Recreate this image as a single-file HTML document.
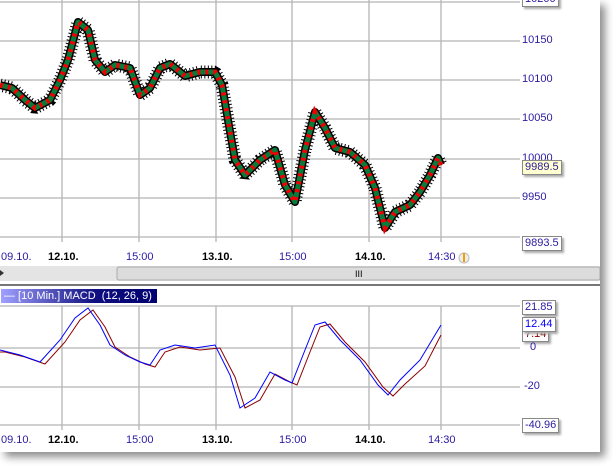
<!DOCTYPE html>
<html><head><style>
body{margin:0;width:616px;height:466px;background:#fff;overflow:hidden;font-family:"Liberation Sans",sans-serif;position:relative}
#p{position:absolute;left:0;top:0;width:600px;height:452px;background:#fff;box-shadow:5px 5px 8px rgba(0,0,0,.45)}
.lb{position:absolute;font-size:11px;color:#2a1aa0}
.b{font-weight:bold;color:#000}
.box{position:absolute;font-size:11px;background:#fff;border:1px solid #888;box-shadow:2px 2px 2px #aaa;padding:0 2px;line-height:13px}
</style></head><body>
<div id="p">
<svg width="600" height="452" style="position:absolute;left:0;top:0" xmlns="http://www.w3.org/2000/svg">
<defs>
<polyline id="pr" points="0,85 12,88 25,100 35,108 50,100 60,80 68,60 78,22 88,30 95,60 105,72 115,65 130,68 140,95 150,88 160,68 170,64 185,76 200,72 215,72 222,85 228,120 235,160 245,175 260,160 275,150 285,185 295,202 305,150 315,112 325,128 335,148 350,152 365,165 375,188 385,228 395,212 410,205 420,192 430,175 438,158 441,165"/>
</defs>
<g stroke="#b4b4b4" stroke-width="1.3" fill="none">
<path d="M0 2H520M0 41H520M0 80H520M0 119H520M0 159H520M0 198H520M0 237H520"/>
<path d="M62 0V242M139 0V242M216 0V242M292 0V242M369 0V242M441 0V242"/>
<path d="M0 306H520M0 348H520M0 387H520M0 425H520"/>
<path d="M62 306V430M139 306V430M216 306V430M292 306V430M369 306V430M441 306V430"/>
</g>
<g fill="none">
<use href="#pr" stroke="#000" stroke-width="13" stroke-dasharray="1 2.5" stroke-linejoin="bevel"/>
<use href="#pr" stroke="#000" stroke-width="8" stroke-linejoin="round"/>
<use href="#pr" stroke="#0a7a3a" stroke-width="5" stroke-linejoin="round"/>
<use href="#pr" stroke="#f00000" stroke-width="5" stroke-dasharray="3 5"/>
</g>
<polyline fill="none" stroke="#8b0000" stroke-width="1" points="0,352 5,352 25,357 45,364 65,342 80,320 93,310 105,327 115,347 130,357 145,364 155,367 165,352 180,347 200,350 220,348 235,377 245,408 260,400 275,374 290,382 297,385 310,352 320,327 330,324 345,342 365,362 383,387 393,396 405,384 425,366 441,335"/>
<polyline fill="none" stroke="#0000ff" stroke-width="1" points="0,350 20,355 40,362 60,340 75,318 88,308 100,325 110,345 125,355 140,362 150,365 160,350 175,345 195,348 215,345 230,375 240,408 255,398 270,372 285,380 292,383 305,350 315,325 325,322 340,340 360,360 378,385 388,395 400,380 420,360 441,325"/>
<rect x="0" y="266" width="600" height="15" fill="#e4e4e4"/>
<rect x="117" y="267" width="483" height="13" rx="2" fill="#dcdcdc" stroke="#aaa"/>
<text x="355" y="277" font-size="9" font-family="Liberation Sans">III</text>
<path d="M4 273L0 270V276Z" fill="#333"/>
<line x1="0" y1="285" x2="600" y2="285" stroke="#777" stroke-width="2"/>
<circle cx="464" cy="258" r="5" fill="#eee" stroke="#bbb"/><path d="M464 253V262" stroke="#f0a000" stroke-width="2"/>
</svg>
<div class="box" style="left:522px;top:-8px;color:#2a1aa0">10200</div>
<div class="lb" style="left:522px;top:34px">10150</div>
<div class="lb" style="left:522px;top:73px">10100</div>
<div class="lb" style="left:522px;top:112px">10050</div>
<div class="lb" style="left:522px;top:152px">10000</div>
<div class="lb" style="left:522px;top:191px">9950</div>
<div class="box" style="left:522px;top:160px;background:#ffffd0;color:#2a1aa0">9989.5</div>
<div class="box" style="left:522px;top:236px;color:#2a1aa0">9893.5</div>
<div class="lb" style="left:1px;top:251px">09.10.</div>
<div class="lb b" style="left:48px;top:251px">12.10.</div>
<div class="lb" style="left:126px;top:251px">15:00</div>
<div class="lb b" style="left:202px;top:251px">13.10.</div>
<div class="lb" style="left:279px;top:251px">15:00</div>
<div class="lb b" style="left:355px;top:251px">14.10.</div>
<div class="lb" style="left:428px;top:251px">14:30</div>
<div style="position:absolute;left:1px;top:289px;width:153px;height:14px;background:linear-gradient(90deg,#a0a0ff,#101080 60%,#000070);color:#fff;font-size:11px;line-height:14px;padding-left:3px">— [10 Min.] MACD &nbsp;(12, 26, 9)</div>
<div class="box" style="left:522px;top:300px;color:#2a1aa0">21.85</div>
<div class="box" style="left:522px;top:327px;color:#8b0000">7.14</div>
<div class="box" style="left:522px;top:317px;color:#0000ff">12.44</div>
<div class="lb" style="left:530px;top:341px">0</div>
<div class="lb" style="left:524px;top:380px">-20</div>
<div class="box" style="left:522px;top:418px;color:#2a1aa0">-40.96</div>
<div class="lb" style="left:1px;top:434px">09.10.</div>
<div class="lb b" style="left:48px;top:434px">12.10.</div>
<div class="lb" style="left:126px;top:434px">15:00</div>
<div class="lb b" style="left:202px;top:434px">13.10.</div>
<div class="lb" style="left:279px;top:434px">15:00</div>
<div class="lb b" style="left:355px;top:434px">14.10.</div>
<div class="lb" style="left:428px;top:434px">14:30</div>
</div>
</body></html>
